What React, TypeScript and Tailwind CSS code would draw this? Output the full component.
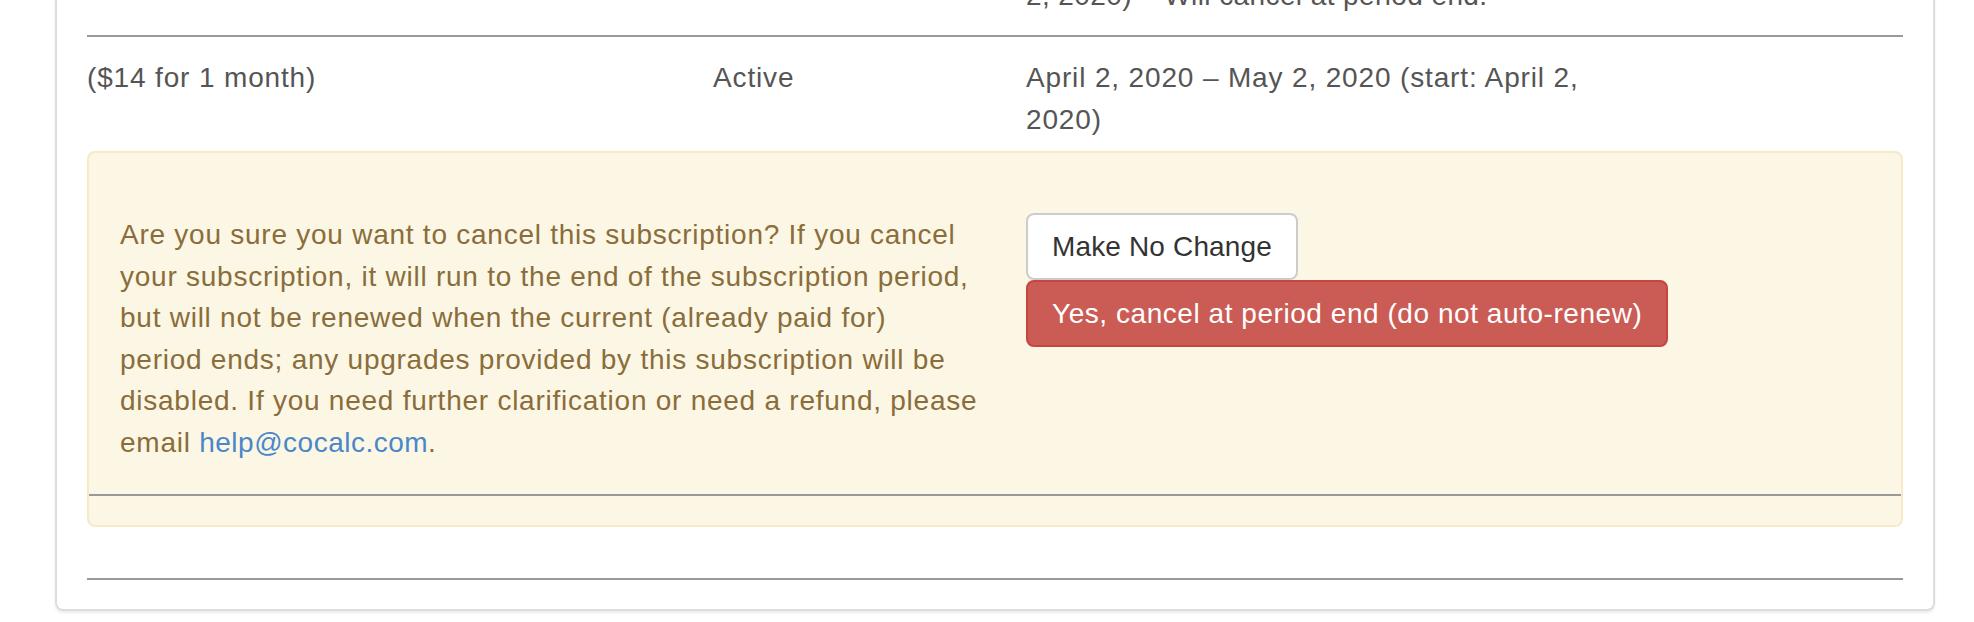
import React from "react";

// subscription list tail + cancel confirmation (bootstrap-ish, 2x scale)
function Row({ cols }: { cols: React.ReactNode[] }) {
  return (
    <div className="grid grid-cols-[626px_313px_565px] text-[#555]">
      {cols.map((c, i) => (
        <div key={i} className="whitespace-nowrap">
          {c}
        </div>
      ))}
    </div>
  );
}

function CancelConfirm() {
  return (
    <div className="mt-[11px] rounded-[8px] border-2 border-[#f8e9c9] bg-[#fbf7e4] pt-[60px] pb-[29px]">
      <div className="grid grid-cols-[937px_1fr]">
        <div className="pl-[31px] pt-px text-[#8a6d3b] whitespace-nowrap tracking-[0.75px]">
          Are you sure you want to cancel this subscription? If you cancel
          <br />
          your subscription, it will run to the end of the subscription period,
          <br />
          but will not be renewed when the current (already paid for)
          <br />
          period ends; any upgrades provided by this subscription will be
          <br />
          disabled. If you need further clarification or need a refund, please
          <br />
          email{" "}
          <a href="#" className="text-[#4a87c9] tracking-[0.5px]">
            help@cocalc.com
          </a>
          .
        </div>
        <div className="flex flex-col items-start">
          <button className="flex h-[67px] items-center rounded-[8px] border-2 border-[#cccccc] bg-white px-[24px] text-[#333] tracking-[0.15px]">
            Make No Change
          </button>
          <button className="flex h-[67px] items-center rounded-[8px] border-2 border-[#c4463f] bg-[#cb5c55] px-[24px] text-white tracking-[0.55px]">
            Yes, cancel at period end (do not auto-renew)
          </button>
        </div>
      </div>
      <hr className="mt-[31px] border-0 h-[2px] bg-[#999]" />
    </div>
  );
}

export default function App() {
  return (
    <div className="h-[622px] w-full overflow-hidden bg-white font-['Liberation_Sans',Arial,sans-serif] text-[28px] leading-[41.5px]">
      <div className="ml-[55px] w-[1880px] rounded-b-[8px] border-2 border-t-0 border-[#dddddd] px-[30px] pb-[29px] shadow-[0_2px_3px_rgba(0,0,0,0.08)]">
        <div className="-mt-[25.5px] tracking-[0.4px]">
          <Row cols={["", "", "2, 2020) – Will cancel at period end."]} />
        </div>
        <hr className="mt-[19px] border-0 h-[2px] bg-[#999]" />
        <div className="pt-[20px] tracking-[0.85px]">
          <Row
            cols={[
              "($14 for 1 month)",
              "Active",
              <>
                April 2, 2020 – May 2, 2020 (start: April 2,
                <br />
                2020)
              </>,
            ]}
          />
        </div>
        <CancelConfirm />
        <hr className="mt-[51px] border-0 h-[2px] bg-[#999]" />
      </div>
    </div>
  );
}
